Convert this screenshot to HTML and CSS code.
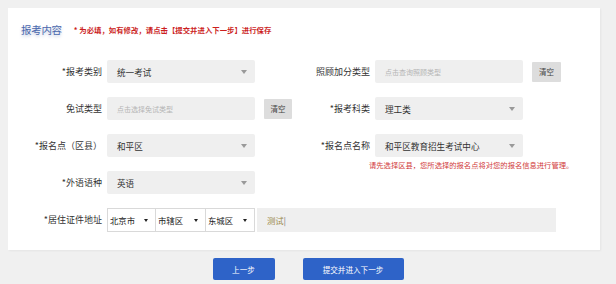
FILE: index.html
```html
<!DOCTYPE html>
<html lang="zh-CN">
<head>
<meta charset="utf-8">
<title>报考内容</title>
<link rel="stylesheet" href="styles.css">
</head>
<body>
<div class="card">
  <div class="head">
    <span class="title">报考内容</span>
    <span class="hint">* 为必填，如有修改，请点击【提交并进入下一步】进行保存</span>
  </div>
  <div class="form">
    <label class="lbl">*报考类别</label>
    <div class="sel">统一考试<i class="arr"></i></div>
    <div></div>
    <label class="lbl">照顾加分类型</label>
    <div class="inp ph">点击查询照顾类型</div>
    <div class="btn-wrap"><span class="clear">清空</span></div>

    <label class="lbl">免试类型</label>
    <div class="inp ph">点击选择免试类型</div>
    <div class="btn-wrap"><span class="clear">清空</span></div>
    <label class="lbl">*报考科类</label>
    <div class="sel">理工类<i class="arr"></i></div>
    <div></div>

    <label class="lbl">*报名点（区县）</label>
    <div class="sel">和平区<i class="arr"></i></div>
    <div></div>
    <label class="lbl">*报名点名称</label>
    <div class="stack">
      <div class="sel">和平区教育招生考试中心<i class="arr"></i></div>
      <p class="note">请先选择区县，您所选择的报名点将对您的报名信息进行管理。</p>
    </div>
    <div></div>

    <label class="lbl">*外语语种</label>
    <div class="sel">英语<i class="arr"></i></div>
    <div class="rest"></div>

    <label class="lbl">*居住证件地址</label>
    <div class="addr">
      <div class="mini w49">北京市<i class="tri"></i></div>
      <div class="mini w50">市辖区<i class="tri"></i></div>
      <div class="mini w49">东城区<i class="tri"></i></div>
      <div class="inp street">测试<span class="caret">|</span></div>
    </div>
  </div>
</div>
<div class="actions">
  <span class="btn prev">上一步</span>
  <span class="btn next">提交并进入下一步</span>
</div>
</body>
</html>
```

FILE: styles.css
```css
* { box-sizing: border-box; }
html, body { margin: 0; padding: 0; }
body {
  background: #f0f0f0;
  padding: 8px 0 0 8px;
  width: 616px;
  height: 284px;
  overflow: hidden;
  font-family: "Microsoft YaHei", "Noto Sans CJK SC", "Noto Sans", sans-serif;
  color: #333;
}
.card {
  width: 592px;
  height: 242px;
  background: #fff;
  padding: 14px 0 0 13px;
  box-shadow: 1px 1px 2px rgba(0,0,0,0.05);
}
.head {
  display: flex;
  align-items: center;
  height: 14px;
}
.title {
  font-size: 10.5px;
  color: #4a68ad;
  text-shadow: 0 2px 3px rgba(120,140,190,0.45);
  letter-spacing: -0.3px;
}
.hint {
  margin-left: 12px;
  font-size: 7.4px;
  color: #cc1f1f;
  font-weight: bold;
  white-space: nowrap;
}
.form {
  margin: 24px 0 0 -13px;
  display: grid;
  grid-template-columns: 99px 148px 37px 83px 148px 38px;
  grid-auto-rows: 23px;
  row-gap: 14px;
  align-items: center;
}
.lbl {
  font-size: 9px;
  text-align: right;
  padding-right: 5px;
  white-space: nowrap;
  color: #333;
}
.sel, .inp {
  height: 23px;
  background: #efefef;
  border-radius: 2px;
  display: flex;
  align-items: center;
  padding-left: 10px;
  font-size: 8.6px;
  color: #333;
  position: relative;
}
.ph {
  font-size: 7px;
  color: #b5b5b5;
}
.arr {
  position: absolute;
  right: 8px;
  top: 10px;
  width: 0;
  height: 0;
  border-left: 3.5px solid transparent;
  border-right: 3.5px solid transparent;
  border-top: 4px solid #999;
}
.btn-wrap {
  display: flex;
  align-items: center;
  padding-left: 9px;
}
.form > .btn-wrap:nth-child(3n) { }
.clear {
  display: inline-flex;
  align-items: center;
  justify-content: center;
  width: 29px;
  height: 20px;
  background: #dddddd;
  font-size: 7.5px;
  color: #444;
  border-radius: 1px;
}
.form .btn-wrap:nth-of-type(1) { }
.stack {
  display: flex;
  flex-direction: column;
}
.stack .sel { width: 148px; }
.note {
  margin: 3px 0 -13px -6px;
  height: 10px;
  line-height: 10px;
  font-size: 7.3px;
  color: #d13a3a;
  white-space: nowrap;
}
.rest { grid-column: span 4; }
.addr {
  grid-column: 2 / span 5;
  display: flex;
  align-items: center;
  height: 24px;
}
.mini {
  height: 24px;
  border: 1px solid #d9d9d9;
  background: #fff;
  display: flex;
  align-items: center;
  padding-left: 2px;
  font-size: 8.4px;
  color: #222;
  position: relative;
}
.mini + .mini { border-left: none; }
.w49 { width: 49px; }
.w50 { width: 50px; }
.tri {
  position: absolute;
  right: 7px;
  top: 10px;
  width: 0;
  height: 0;
  border-left: 2.5px solid transparent;
  border-right: 2.5px solid transparent;
  border-top: 3.5px solid #222;
}
.street {
  margin-left: 2px;
  width: 299px;
  height: 24px;
  border-radius: 0;
  color: #9a8a4a;
  font-size: 8.4px;
}
.caret { color: #333; font-weight: 300; }
.actions {
  display: flex;
  justify-content: center;
  gap: 28px;
  margin: 8px 0 0 -8px;
  width: 616px;
}
.btn {
  height: 22px;
  display: inline-flex;
  align-items: center;
  justify-content: center;
  background: #2e63c8;
  color: #fff;
  font-size: 7.6px;
  border-radius: 2px;
}
.prev { width: 62px; }
.next { width: 101px; }
```
